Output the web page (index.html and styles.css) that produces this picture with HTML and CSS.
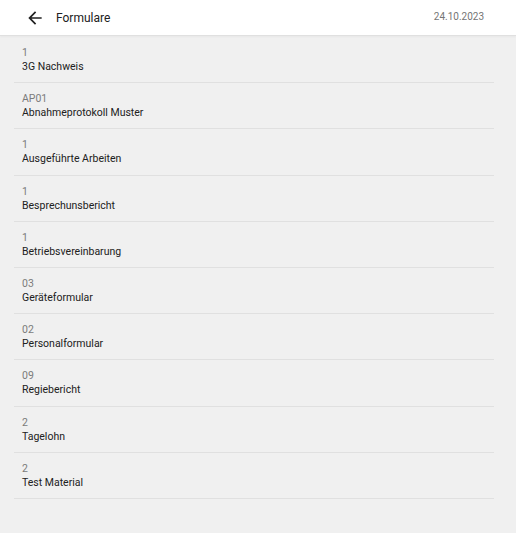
FILE: index.html
```html
<!DOCTYPE html>
<html lang="de">
<head>
<meta charset="utf-8">
<link rel="stylesheet" href="styles.css">
</head>
<body>
<header class="topbar">
  <div class="left">
    <svg class="back" viewBox="0 0 24 24" width="20" height="20"><path d="M20 11H7.83l5.59-5.59L12 4l-8 8 8 8 1.41-1.41L7.83 13H20v-2z" fill="#212121"/></svg>
    <span class="title">Formulare</span>
  </div>
  <span class="date">24.10.2023</span>
</header>
<ul class="list">
  <li class="item"><span class="num">1</span><span class="name">3G Nachweis</span></li>
  <li class="item"><span class="num">AP01</span><span class="name">Abnahmeprotokoll Muster</span></li>
  <li class="item"><span class="num">1</span><span class="name">Ausgeführte Arbeiten</span></li>
  <li class="item"><span class="num">1</span><span class="name">Besprechunsbericht</span></li>
  <li class="item"><span class="num">1</span><span class="name">Betriebsvereinbarung</span></li>
  <li class="item"><span class="num">03</span><span class="name">Geräteformular</span></li>
  <li class="item"><span class="num">02</span><span class="name">Personalformular</span></li>
  <li class="item"><span class="num">09</span><span class="name">Regiebericht</span></li>
  <li class="item"><span class="num">2</span><span class="name">Tagelohn</span></li>
  <li class="item"><span class="num">2</span><span class="name">Test Material</span></li>
</ul>
</body>
</html>
```
FILE: styles.css
```css
html, body {
  margin: 0;
  padding: 0;
  background: #f0f0f0;
  font-family: Roboto, "Liberation Sans", sans-serif;
  height: 100%;
}
.topbar {
  height: 36px;
  background: #ffffff;
  border-bottom: 1px solid #e0e0e0;
  box-shadow: 0 1px 2px rgba(0,0,0,0.04);
  display: flex;
  align-items: center;
  justify-content: space-between;
  padding: 0 32px 0 25px;
  box-sizing: border-box;
}
.left {
  display: flex;
  align-items: center;
}
.back {
  display: block;
  margin-right: 11px;
}
.title {
  font-size: 12px;
  color: #212121;
}
.date {
  font-size: 10px;
  color: #757575;
  margin-top: -2px;
}
.list {
  list-style: none;
  margin: 0 22px 0 14px;
  padding: 1px 0 0;
}
.item {
  display: flex;
  flex-direction: column;
  padding: 9px 8px 8.2px;
  border-bottom: 1px solid #e0e0e0;
}
.num {
  font-size: 10.5px;
  line-height: 14px;
  color: #7b7b7b;
}
.name {
  font-size: 10.5px;
  line-height: 14px;
  color: #212121;
}
```
